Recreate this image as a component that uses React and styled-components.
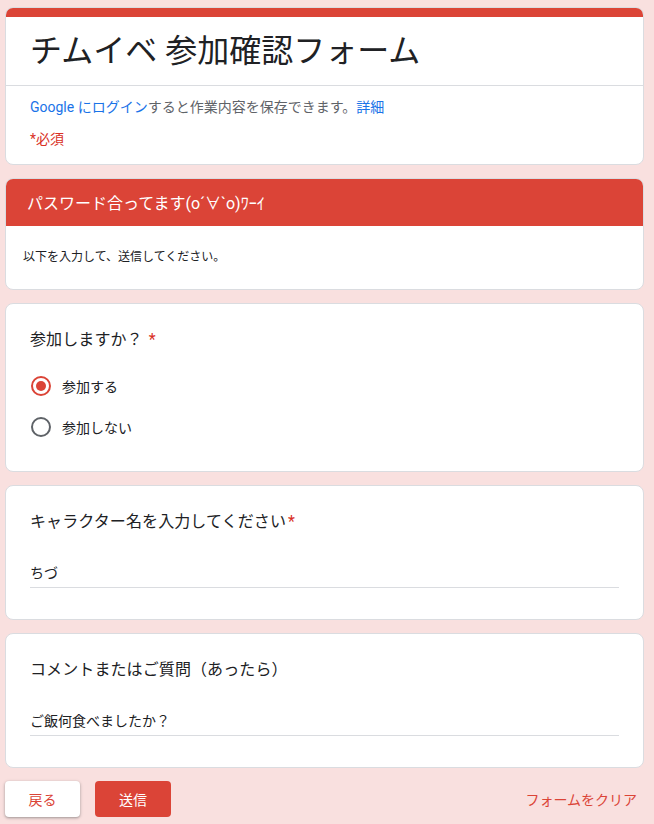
import React, { useState } from 'react';
import styled, { createGlobalStyle } from 'styled-components';

const red = '#db4437';
const ink = '#202124';
const line = '#dadce0';

const GlobalStyle = createGlobalStyle`
  html, body {
    margin: 0;
    padding: 0;
    background: #f9e0df;
  }
  body {
    font-family: Roboto, "Noto Sans CJK JP", "Noto Sans", sans-serif;
    color: ${ink};
  }
`;

const Page = styled.div`
  width: 639px;
  padding: 7px 10px 7px 5px;
  display: flex;
  flex-direction: column;
  gap: 13px;
`;

const Card = styled.div`
  background: #fff;
  border: 1px solid ${line};
  border-radius: 8px;
  overflow: hidden;
`;

const TopBar = styled.div`
  height: 10px;
  background: ${red};
  margin: -1px -1px 0;
`;

const FormTitle = styled.h1`
  margin: 0;
  padding: 14px 24px;
  font-size: 32px;
  line-height: 40px;
  font-weight: 400;
  border-bottom: 1px solid ${line};
`;

const Intro = styled.div`
  padding: 11px 24px 15px;
  display: flex;
  flex-direction: column;
  gap: 12px;
`;

const Note = styled.div`
  font-size: 14px;
  line-height: 20px;
  color: ${p => p.$required ? '#d93025' : '#5f6368'};
`;

const Link = styled.a`
  color: #1a73e8;
  text-decoration: none;
`;

const SectionHead = styled.div`
  height: 48px;
  background: ${red};
  color: #fff;
  font-size: 16px;
  display: flex;
  align-items: center;
  padding: 0 22px;
  margin: -1px -1px 0;
`;

const SectionBody = styled.div`
  padding: 22px 17px 23px;
  font-size: 12px;
  line-height: 18px;
`;

const Question = styled.div`
  padding: 24px 24px ${p => p.$pad || 24}px;
`;

const Label = styled.div`
  font-size: 16px;
  line-height: 24px;
  letter-spacing: 0.1px;
`;

const Star = styled.span`
  color: #d93025;
  margin-left: ${p => p.$gap || 4}px;
`;

const Options = styled.div`
  margin-top: 13px;
  display: flex;
  flex-direction: column;
`;

const Option = styled.label`
  height: 41px;
  display: flex;
  align-items: center;
  gap: 11px;
  font-size: 14px;
  cursor: pointer;
`;

const Radio = styled.span`
  box-sizing: border-box;
  width: 20px;
  height: 20px;
  margin-left: 1px;
  border-radius: 50%;
  border: 2px solid ${p => p.$on ? red : '#5f6368'};
  display: flex;
  align-items: center;
  justify-content: center;
  &::after {
    content: '';
    width: 10px;
    height: 10px;
    border-radius: 50%;
    background: ${red};
    display: ${p => p.$on ? 'block' : 'none'};
  }
`;

const Field = styled.div`
  margin-top: 29px;
  padding-bottom: 4px;
  border-bottom: 1px solid ${line};
  font-size: 14px;
  line-height: 20px;
`;

const Footer = styled.div`
  display: flex;
  align-items: center;
  gap: 15px;
`;

const Button = styled.button`
  width: ${p => p.$w || 76}px;
  height: 36px;
  border: none;
  border-radius: 4px;
  font-family: inherit;
  font-size: 14px;
  font-weight: 400;
  cursor: pointer;
  background: ${p => p.$primary ? red : '#fff'};
  color: ${p => p.$primary ? '#fff' : red};
  box-shadow: ${p => p.$primary ? 'none' : '0 1px 2px rgba(60,64,67,.3), 0 1px 3px 1px rgba(60,64,67,.15)'};
`;

const Clear = styled.button`
  margin-left: auto;
  margin-right: 7px;
  border: none;
  background: none;
  padding: 0;
  font-family: inherit;
  font-size: 14px;
  color: ${red};
  cursor: pointer;
`;

export default function App() {
  const [join, setJoin] = useState('yes');

  return (
    <>
      <GlobalStyle />
      <Page>
        <Card>
          <TopBar />
          <FormTitle>チムイベ 参加確認フォーム</FormTitle>
          <Intro>
            <Note>
              <Link href="#">Google にログイン</Link>すると作業内容を保存できます。<Link href="#">詳細</Link>
            </Note>
            <Note $required>*必須</Note>
          </Intro>
        </Card>

        <Card>
          <SectionHead>パスワード合ってます(o´∀`o)ﾜｰｲ</SectionHead>
          <SectionBody>以下を入力して、送信してください。</SectionBody>
        </Card>

        <Card>
          <Question>
            <Label>参加しますか？<Star $gap={6}>*</Star></Label>
            <Options>
              <Option onClick={() => setJoin('yes')}>
                <Radio $on={join === 'yes'} />
                参加する
              </Option>
              <Option onClick={() => setJoin('no')}>
                <Radio $on={join === 'no'} />
                参加しない
              </Option>
            </Options>
          </Question>
        </Card>

        <Card>
          <Question $pad={31}>
            <Label>キャラクター名を入力してください<Star $gap={2}>*</Star></Label>
            <Field>ちづ</Field>
          </Question>
        </Card>

        <Card>
          <Question $pad={31}>
            <Label>コメントまたはご質問（あったら）</Label>
            <Field>ご飯何食べましたか？</Field>
          </Question>
        </Card>

        <Footer>
          <Button $w={75}>戻る</Button>
          <Button $primary>送信</Button>
          <Clear>フォームをクリア</Clear>
        </Footer>
      </Page>
    </>
  );
}
